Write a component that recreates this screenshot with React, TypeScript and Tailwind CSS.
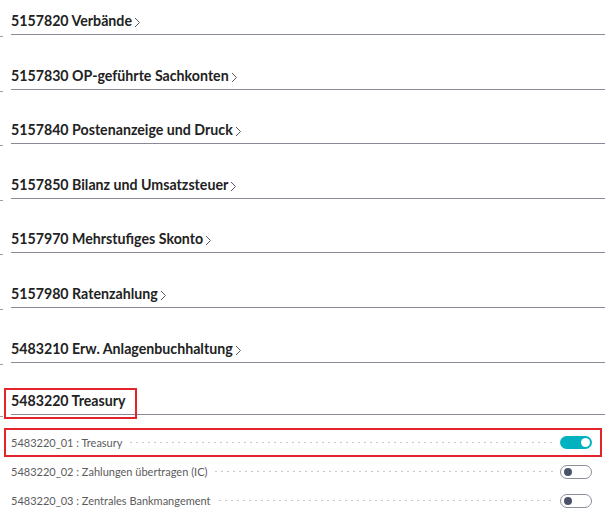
import React from 'react';

const sections = [
  { title: '5157820 Verbände', chevron: true },
  { title: '5157830 OP-geführte Sachkonten', chevron: true },
  { title: '5157840 Postenanzeige und Druck', chevron: true },
  { title: '5157850 Bilanz und Umsatzsteuer', chevron: true },
  { title: '5157970 Mehrstufiges Skonto', chevron: true },
  { title: '5157980 Ratenzahlung', chevron: true },
  { title: '5483210 Erw. Anlagenbuchhaltung', chevron: true },
];

const features = [
  { label: '5483220_01 : Treasury', on: true, marked: true },
  { label: '5483220_02 : Zahlungen übertragen (IC)', on: false },
  { label: '5483220_03 : Zentrales Bankmangement', on: false },
];

function Chevron() {
  return (
    <svg width="7" height="11" viewBox="0 0 7 11" className="ml-[2px] mt-[3px] shrink-0">
      <path d="M1 1 L5.5 5.5 L1 10" fill="none" stroke="#5a5a5a" strokeWidth="1" />
    </svg>
  );
}

function Toggle({ on }: { on: boolean }) {
  if (on) {
    return (
      <div className="flex h-[13px] w-[32px] items-center justify-end rounded-full bg-[#00b2c0] pr-[2px]">
        <div className="h-[9px] w-[9px] rounded-full bg-white" />
      </div>
    );
  }
  return (
    <div className="flex h-[14px] w-[32px] items-center rounded-full border border-[#8a8f9b] bg-white pl-[3px]">
      <div className="h-[8px] w-[8px] rounded-full bg-[#4b5368]" />
    </div>
  );
}

function SectionHeader({ title, chevron, marked }: { title: string; chevron?: boolean; marked?: boolean }) {
  return (
    <div className="relative flex items-end">
      <div className="mb-[-2px] h-px w-[3px] bg-[#9ca0aa]" />
      <div className="ml-[8px] flex flex-1 items-center border-b border-[#878b97] pb-[3px]">
        <span className="text-[14.2px] font-bold leading-[20px] text-[#222]">{title}</span>
        {chevron && <Chevron />}
      </div>
      {marked && (
        <div className="pointer-events-none absolute left-[4px] top-[-3px] h-[31px] w-[133px] border-2 border-[#e3242b]" />
      )}
    </div>
  );
}

export default function App() {
  return (
    <div
      className="min-h-[529px] w-[605px] bg-white pt-[11px]"
      style={{ fontFamily: 'Lato, "Noto Sans", sans-serif' }}
    >
      <div className="flex flex-col gap-[30.6px]">
        {sections.map((s) => (
          <SectionHeader key={s.title} title={s.title} chevron={s.chevron} />
        ))}
        <div className="mt-[-2px]">
          <SectionHeader title="5483220 Treasury" marked />
        </div>
      </div>

      <div className="mt-[13px] flex flex-col">
        {features.map((f) => (
          <div key={f.label} className="relative flex h-[29px] items-center pl-[11px] pr-[13px]">
            <span className="shrink-0 text-[11px] leading-none text-[#5b5b5b]">{f.label}</span>
            <div className="mx-[6px] h-[3px] flex-1 bg-[radial-gradient(circle,#c9c9c9_0.8px,transparent_1.1px)] bg-[length:6px_3px] bg-repeat-x" />
            <Toggle on={f.on} />
            {f.marked && (
              <div className="pointer-events-none absolute left-[4px] right-[3px] top-[0px] bottom-[0px] border-2 border-[#e3242b]" />
            )}
          </div>
        ))}
      </div>
    </div>
  );
}
